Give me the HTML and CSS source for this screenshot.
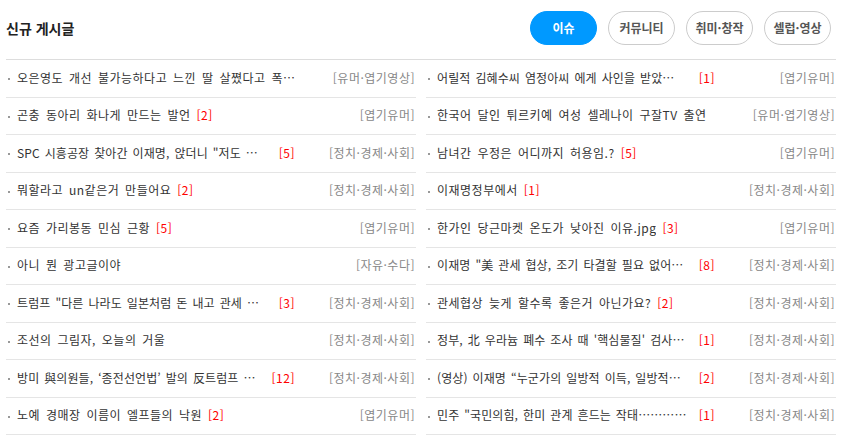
FILE: index.html
```html
<!DOCTYPE html>
<html lang="ko">
<head>
    <meta charset="UTF-8">
    <meta name="viewport" content="width=device-width, initial-scale=1.0">
    <title>신규 게시글</title>
    <link rel="stylesheet" href="styles.css">
</head>
<body>
    <div class="board">
        <div class="board-head">
            <h2 class="board-title">신규 게시글</h2>
            <div class="tabs">
                <button class="tab active">이슈</button>
                <button class="tab">커뮤니티</button>
                <button class="tab">취미·창작</button>
                <button class="tab">셀럽·영상</button>
            </div>
        </div>
        <div class="lists">
            <ul class="list">
                <li class="item"><span class="subject"><span class="title">오은영도 개선 불가능하다고 느낀 딸 살쪘다고 폭…</span></span><span class="cat">[유머·엽기영상]</span></li>
                <li class="item"><span class="subject"><span class="title">곤충 동아리 화나게 만드는 발언</span><span class="cnt">[2]</span></span><span class="cat">[엽기유머]</span></li>
                <li class="item cut"><span class="subject"><span class="title">SPC 시흥공장 찾아간 이재명, 앉더니 "저도 …</span><span class="cnt">[5]</span></span><span class="cat">[정치·경제·사회]</span></li>
                <li class="item"><span class="subject"><span class="title">뭐할라고 un같은거 만들어요</span><span class="cnt">[2]</span></span><span class="cat">[정치·경제·사회]</span></li>
                <li class="item"><span class="subject"><span class="title">요즘 가리봉동 민심 근황</span><span class="cnt">[5]</span></span><span class="cat">[엽기유머]</span></li>
                <li class="item"><span class="subject"><span class="title">아니 뭔 광고글이야</span></span><span class="cat">[자유·수다]</span></li>
                <li class="item cut"><span class="subject"><span class="title">트럼프 "다른 나라도 일본처럼 돈 내고 관세 …</span><span class="cnt">[3]</span></span><span class="cat">[정치·경제·사회]</span></li>
                <li class="item"><span class="subject"><span class="title">조선의 그림자, 오늘의 거울</span></span><span class="cat">[정치·경제·사회]</span></li>
                <li class="item cut"><span class="subject"><span class="title">방미 與의원들, ‘종전선언법’ 발의 反트럼프 …</span><span class="cnt">[12]</span></span><span class="cat">[정치·경제·사회]</span></li>
                <li class="item"><span class="subject"><span class="title">노예 경매장 이름이 엘프들의 낙원</span><span class="cnt">[2]</span></span><span class="cat">[엽기유머]</span></li>
            </ul>
            <ul class="list">
                <li class="item cut"><span class="subject"><span class="title">어릴적 김혜수씨 염정아씨 에게 사인을 받았…</span><span class="cnt">[1]</span></span><span class="cat">[엽기유머]</span></li>
                <li class="item"><span class="subject"><span class="title">한국어 달인 튀르키예 여성 셀레나이 구잘TV 출연</span></span><span class="cat">[유머·엽기영상]</span></li>
                <li class="item"><span class="subject"><span class="title">남녀간 우정은 어디까지 허용임.?</span><span class="cnt">[5]</span></span><span class="cat">[엽기유머]</span></li>
                <li class="item"><span class="subject"><span class="title">이재명정부에서</span><span class="cnt">[1]</span></span><span class="cat">[정치·경제·사회]</span></li>
                <li class="item"><span class="subject"><span class="title">한가인 당근마켓 온도가 낮아진 이유.jpg</span><span class="cnt">[3]</span></span><span class="cat">[엽기유머]</span></li>
                <li class="item cut"><span class="subject"><span class="title">이재명 "美 관세 협상, 조기 타결할 필요 없어…</span><span class="cnt">[8]</span></span><span class="cat">[정치·경제·사회]</span></li>
                <li class="item"><span class="subject"><span class="title">관세협상 늦게 할수록 좋은거 아닌가요?</span><span class="cnt">[2]</span></span><span class="cat">[정치·경제·사회]</span></li>
                <li class="item cut"><span class="subject"><span class="title">정부, 北 우라늄 폐수 조사 때 '핵심물질' 검사…</span><span class="cnt">[1]</span></span><span class="cat">[정치·경제·사회]</span></li>
                <li class="item cut"><span class="subject"><span class="title">(영상) 이재명 “누군가의 일방적 이득, 일방적…</span><span class="cnt">[2]</span></span><span class="cat">[정치·경제·사회]</span></li>
                <li class="item cut"><span class="subject"><span class="title">민주 "국민의힘, 한미 관계 흔드는 작태…………</span><span class="cnt">[1]</span></span><span class="cat">[정치·경제·사회]</span></li>
            </ul>
        </div>
    </div>
</body>
</html>
```

FILE: styles.css
```css
body {
    margin: 0;
    background: #fff;
    color: #333;
    font-family: "Noto Sans CJK KR", "Noto Sans", sans-serif;
    font-size: 12px;
}

.board {
    width: 830px;
    padding: 0 15px 0 6px;
}

.board-head {
    display: flex;
    align-items: center;
    justify-content: space-between;
    height: 59px;
    border-bottom: 1px solid #ddd;
}

.board-title {
    margin: -3px 0 0;
    font-size: 14px;
    font-weight: bold;
    color: #222;
}

.tabs {
    display: flex;
    gap: 11px;
    margin-right: 5px;
    margin-top: -4px;
}

.tab {
    width: 67px;
    height: 34px;
    padding: 0;
    border: 1px solid #ccc;
    border-radius: 17px;
    background: #fff;
    color: #555;
    font-family: inherit;
    font-size: 12px;
    font-weight: bold;
    cursor: pointer;
}

.tab.active {
    background: #0099ff;
    border-color: #0099ff;
    color: #fff;
}

.lists {
    display: flex;
    gap: 10px;
}

.list {
    flex: 1;
    margin: 0;
    padding: 0;
    list-style: none;
}

.item {
    display: flex;
    align-items: center;
    box-sizing: border-box;
    height: 37.5px;
    padding: 0 1px 2px 11px;
    border-bottom: 1px solid #e5e5e5;
    letter-spacing: 0.5px;
    word-spacing: 2px;
    position: relative;
}

.item::before {
    content: "";
    position: absolute;
    left: 2px;
    top: 18px;
    width: 2px;
    height: 2px;
    background: #999;
}

.subject {
    display: flex;
    max-width: 278px;
    min-width: 0;
}

.cut .subject {
    width: 278px;
}

.title {
    overflow: hidden;
    white-space: nowrap;
    text-overflow: ellipsis;
}

.cut .title {
    flex: 1;
    letter-spacing: 0.1px;
    word-spacing: 1.5px;
}

.cnt {
    flex-shrink: 0;
    margin-left: 6px;
    color: #f00;
}

.cat {
    margin-left: auto;
    flex-shrink: 0;
    color: #888;
}
```
